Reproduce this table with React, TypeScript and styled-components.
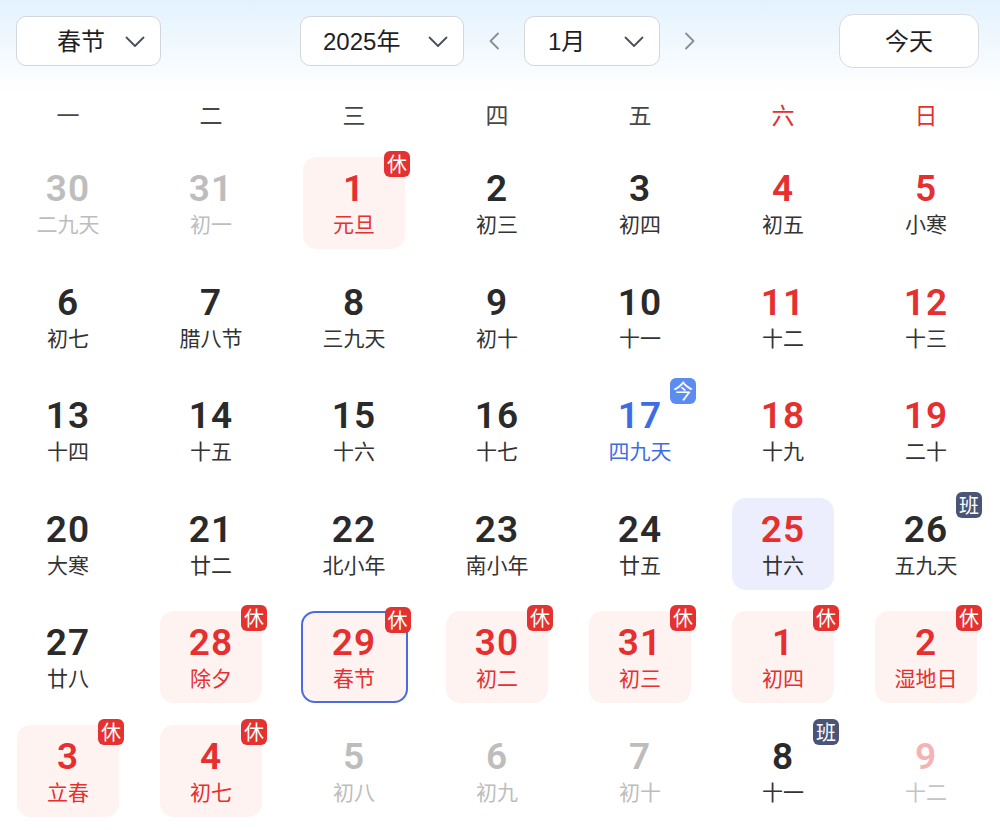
import React from "react";
import styled, { createGlobalStyle, css } from "styled-components";

const GlobalStyle = createGlobalStyle`
  html, body {
    margin: 0;
    padding: 0;
    background: #ffffff;
  }
  body {
    font-family: "Liberation Sans", "Noto Sans CJK SC", sans-serif;
  }
`;

const RED = "#e5302f";
const BLUE = "#3e6ce6";
const INK = "#2a2a2a";
const MUTED = "#bdbdbd";

type Tone = "normal" | "weekend" | "muted" | "mutedWeekend" | "holiday" | "today";
type Badge = "休" | "班" | "今";
type Fill = "rest" | "picked";

interface Day {
  day: number;
  lunar: string;
  tone: Tone;
  badge?: Badge;
  fill?: Fill;
  outlined?: boolean;
}

const d = (
  day: number,
  lunar: string,
  tone: Tone = "normal",
  badge?: Badge,
  fill?: Fill,
  outlined?: boolean
): Day => ({ day, lunar, tone, badge, fill, outlined });

const DAYS: Day[] = [
  d(30, "二九天", "muted"),
  d(31, "初一", "muted"),
  d(1, "元旦", "holiday", "休", "rest"),
  d(2, "初三"),
  d(3, "初四"),
  d(4, "初五", "weekend"),
  d(5, "小寒", "weekend"),

  d(6, "初七"),
  d(7, "腊八节"),
  d(8, "三九天"),
  d(9, "初十"),
  d(10, "十一"),
  d(11, "十二", "weekend"),
  d(12, "十三", "weekend"),

  d(13, "十四"),
  d(14, "十五"),
  d(15, "十六"),
  d(16, "十七"),
  d(17, "四九天", "today", "今"),
  d(18, "十九", "weekend"),
  d(19, "二十", "weekend"),

  d(20, "大寒"),
  d(21, "廿二"),
  d(22, "北小年"),
  d(23, "南小年"),
  d(24, "廿五"),
  d(25, "廿六", "weekend", undefined, "picked"),
  d(26, "五九天", "normal", "班"),

  d(27, "廿八"),
  d(28, "除夕", "holiday", "休", "rest"),
  d(29, "春节", "holiday", "休", "rest", true),
  d(30, "初二", "holiday", "休", "rest"),
  d(31, "初三", "holiday", "休", "rest"),
  d(1, "初四", "holiday", "休", "rest"),
  d(2, "湿地日", "holiday", "休", "rest"),

  d(3, "立春", "holiday", "休", "rest"),
  d(4, "初七", "holiday", "休", "rest"),
  d(5, "初八", "muted"),
  d(6, "初九", "muted"),
  d(7, "初十", "muted"),
  d(8, "十一", "normal", "班"),
  d(9, "十二", "mutedWeekend"),
];

const WEEKDAYS = ["一", "二", "三", "四", "五", "六", "日"];

const numberColor: Record<Tone, string> = {
  normal: INK,
  weekend: RED,
  muted: MUTED,
  mutedWeekend: "#f6b3b3",
  holiday: RED,
  today: BLUE,
};

const lunarColor: Record<Tone, string> = {
  normal: "#333333",
  weekend: "#333333",
  muted: MUTED,
  mutedWeekend: "#c4c4c4",
  holiday: RED,
  today: BLUE,
};

const badgeColor: Record<Badge, string> = {
  休: "#e3322f",
  班: "#4a5475",
  今: "#5b8cf0",
};

const Page = styled.div`
  width: 1000px;
  min-height: 830px;
  background: linear-gradient(180deg, #e3f2fd 0px, #f3f9fe 50px, #ffffff 92px);
`;

const Toolbar = styled.div`
  display: flex;
  align-items: center;
  padding: 14px 21px 0 16px;
  height: 54px;
`;

const Select = styled.div<{ $width: number; $padLeft: number }>`
  box-sizing: border-box;
  width: ${(p) => p.$width}px;
  height: 50px;
  display: flex;
  align-items: center;
  justify-content: space-between;
  padding: 2px 15px 0 ${(p) => p.$padLeft}px;
  background: #ffffff;
  border: 1.5px solid #d3d6dd;
  border-radius: 10px;
  font-size: 24px;
  line-height: 28px;
  color: #1f1f1f;
`;

const CenterGroup = styled.div`
  display: flex;
  align-items: center;
  margin-left: 139px;
`;

const ArrowButton = styled.div`
  width: 60px;
  height: 50px;
  display: flex;
  align-items: center;
  justify-content: center;
`;

const TodayButton = styled.div`
  box-sizing: border-box;
  margin-left: auto;
  width: 140px;
  height: 54px;
  display: flex;
  align-items: center;
  justify-content: center;
  padding-top: 2px;
  background: #ffffff;
  border: 1.5px solid #d9dbe0;
  border-radius: 14px;
  font-size: 24px;
  line-height: 28px;
  color: #1f1f1f;
`;

const Grid = styled.div`
  display: grid;
  grid-template-columns: repeat(7, 136px);
  column-gap: 7px;
`;

const WeekRow = styled(Grid)`
  margin-top: 22px;
  height: 48px;
  align-items: center;
`;

const WeekLabel = styled.div<{ $red: boolean }>`
  text-align: center;
  font-family: "Noto Sans CJK SC", sans-serif;
  font-size: 23px;
  color: ${(p) => (p.$red ? RED : "#474747")};
`;

const DayGrid = styled(Grid)`
  padding-top: 19px;
  row-gap: 21.6px;
`;

const Cell = styled.div<{ $fill?: Fill; $outlined?: boolean }>`
  position: relative;
  box-sizing: border-box;
  justify-self: center;
  width: 102px;
  height: 92px;
  display: flex;
  flex-direction: column;
  align-items: center;
  padding-top: 12px;
  border-radius: 14px;
  background: ${(p) =>
    p.$fill === "rest" ? "#fff3f2" : p.$fill === "picked" ? "#eceefd" : "transparent"};
  ${(p) =>
    p.$outlined &&
    css`
      width: 107px;
      padding-top: 10px;
      border: 2.5px solid #4a6ce0;
    `}
`;

const DayNumber = styled.div<{ $tone: Tone }>`
  font-family: Roboto, "DejaVu Sans", sans-serif;
  font-weight: 600;
  font-size: 37px;
  line-height: 40px;
  height: 40px;
  letter-spacing: 1px;
  color: ${(p) => numberColor[p.$tone]};
`;

const Lunar = styled.div<{ $tone: Tone }>`
  margin-top: 1px;
  font-family: "Noto Sans CJK SC", sans-serif;
  font-size: 21px;
  line-height: 26px;
  color: ${(p) => lunarColor[p.$tone]};
`;

const Tag = styled.div<{ $kind: Badge }>`
  position: absolute;
  top: -6px;
  right: -5px;
  width: 26px;
  height: 26px;
  border-radius: 6px;
  display: flex;
  align-items: center;
  justify-content: center;
  background: ${(p) => badgeColor[p.$kind]};
  color: #ffffff;
  font-family: "Noto Sans CJK SC", sans-serif;
  font-size: 20px;
  line-height: 1;
`;

const ChevronDown = () => (
  <svg width="20" height="12" viewBox="0 0 20 12" fill="none">
    <path d="M1.5 1.5 L10 10 L18.5 1.5" stroke="#4a4f5a" strokeWidth="1.8" strokeLinecap="round" strokeLinejoin="round" />
  </svg>
);

const Chevron = ({ dir }: { dir: "left" | "right" }) => (
  <svg width="12" height="18" viewBox="0 0 12 18" fill="none">
    <path
      d={dir === "left" ? "M10 1.5 L2.5 9 L10 16.5" : "M2 1.5 L9.5 9 L2 16.5"}
      stroke="#8a8d96"
      strokeWidth="1.8"
      strokeLinecap="round"
      strokeLinejoin="round"
    />
  </svg>
);

export default function App() {
  return (
    <Page>
      <GlobalStyle />
      <Toolbar>
        <Select $width={145} $padLeft={40}>
          <span>春节</span>
          <ChevronDown />
        </Select>
        <CenterGroup>
          <Select $width={164} $padLeft={22}>
            <span>2025年</span>
            <ChevronDown />
          </Select>
          <ArrowButton>
            <Chevron dir="left" />
          </ArrowButton>
          <Select $width={136} $padLeft={23}>
            <span>1月</span>
            <ChevronDown />
          </Select>
          <ArrowButton>
            <Chevron dir="right" />
          </ArrowButton>
        </CenterGroup>
        <TodayButton>今天</TodayButton>
      </Toolbar>

      <WeekRow>
        {WEEKDAYS.map((w, i) => (
          <WeekLabel key={w} $red={i >= 5}>
            {w}
          </WeekLabel>
        ))}
      </WeekRow>

      <DayGrid>
        {DAYS.map((item, i) => (
          <Cell key={i} $fill={item.fill} $outlined={item.outlined}>
            <DayNumber $tone={item.tone}>{item.day}</DayNumber>
            <Lunar $tone={item.tone}>{item.lunar}</Lunar>
            {item.badge && <Tag $kind={item.badge}>{item.badge}</Tag>}
          </Cell>
        ))}
      </DayGrid>
    </Page>
  );
}
